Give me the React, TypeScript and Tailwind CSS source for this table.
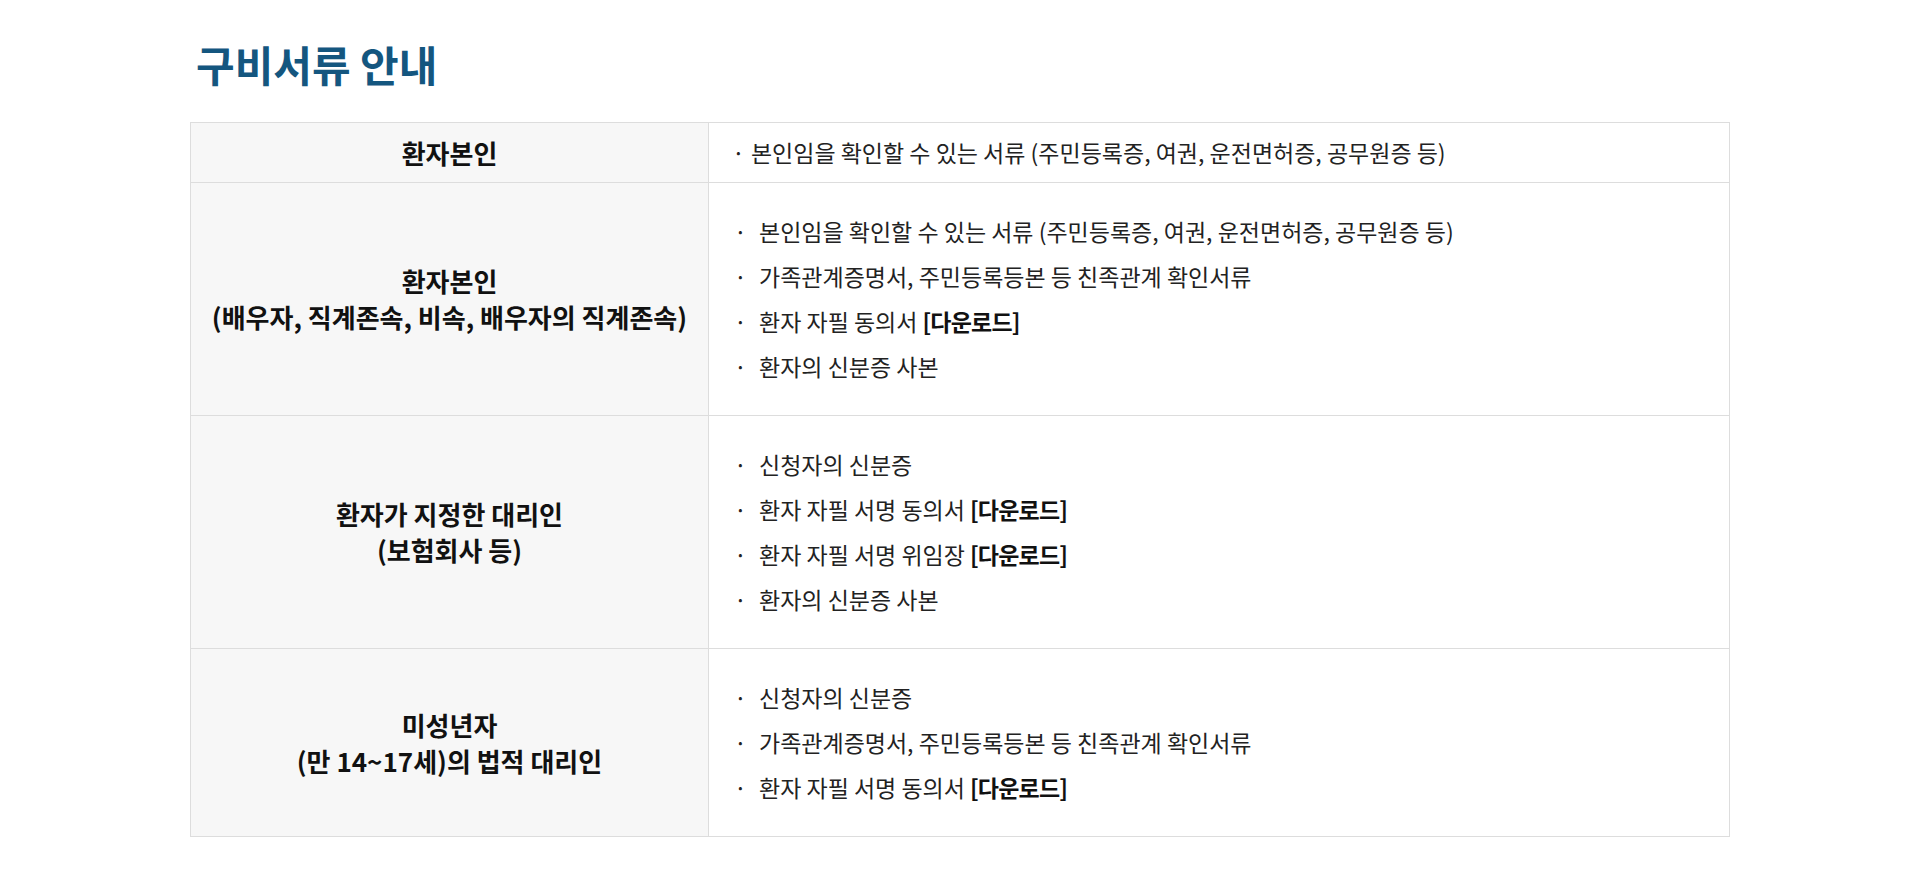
import React from 'react';

type Item = { text: string; download?: boolean };
type Row = { head: string[]; items: Item[] };

const ROWS: Row[] = [
  {
    head: ['환자본인', '(배우자, 직계존속, 비속, 배우자의 직계존속)'],
    items: [
      { text: '본인임을 확인할 수 있는 서류 (주민등록증, 여권, 운전면허증, 공무원증 등)' },
      { text: '가족관계증명서, 주민등록등본 등 친족관계 확인서류' },
      { text: '환자 자필 동의서', download: true },
      { text: '환자의 신분증 사본' },
    ],
  },
  {
    head: ['환자가 지정한 대리인', '(보험회사 등)'],
    items: [
      { text: '신청자의 신분증' },
      { text: '환자 자필 서명 동의서', download: true },
      { text: '환자 자필 서명 위임장', download: true },
      { text: '환자의 신분증 사본' },
    ],
  },
  {
    head: ['미성년자', '(만 14~17세)의 법적 대리인'],
    items: [
      { text: '신청자의 신분증' },
      { text: '가족관계증명서, 주민등록등본 등 친족관계 확인서류' },
      { text: '환자 자필 서명 동의서', download: true },
    ],
  },
];

export default function App() {
  return (
    <div
      className="min-h-screen bg-white text-[#222]"
      style={{ fontFamily: '"Noto Sans CJK KR", "Noto Sans", sans-serif' }}
    >
      <div className="mx-auto w-[1540px] pt-[39px]">
        {/* 타이틀 */}
        <h2 className="pl-[6px] text-[42px] font-bold leading-[50px] text-[#14567f]">
          구비서류 안내
        </h2>

        <table className="mt-[33px] w-full border-collapse border border-[#dddddd]">
          <tbody>
            <tr className="border-b border-[#dddddd]">
              <th className="w-[518px] border-r border-[#dddddd] bg-[#f7f7f7] text-[26px] font-bold leading-[36px] text-[#111]">
                환자본인
              </th>
              <td className="py-[7px] pl-[23px] text-[23px] leading-[45px]">
                <span className="mr-[6px]">·</span>
                본인임을 확인할 수 있는 서류 (주민등록증, 여권, 운전면허증, 공무원증 등)
              </td>
            </tr>

            {ROWS.map((row, i) => (
              <tr key={i} className="border-b border-[#dddddd]">
                <th className="border-r border-[#dddddd] bg-[#f7f7f7] text-[26px] font-bold leading-[36px] text-[#111]">
                  {row.head.map((h) => (
                    <div key={h}>{h}</div>
                  ))}
                </th>
                <td className="py-[26px] pl-[25px] text-[23px]">
                  <ul>
                    {row.items.map((it) => (
                      <li key={it.text} className="flex leading-[45px]">
                        <span className="w-[25px] shrink-0">·</span>
                        <span>
                          {it.text}
                          {it.download && (
                            <b className="ml-[5px] font-bold tracking-[-0.8px] text-[#111]">[다운로드]</b>
                          )}
                        </span>
                      </li>
                    ))}
                  </ul>
                </td>
              </tr>
            ))}
          </tbody>
        </table>
      </div>
    </div>
  );
}
